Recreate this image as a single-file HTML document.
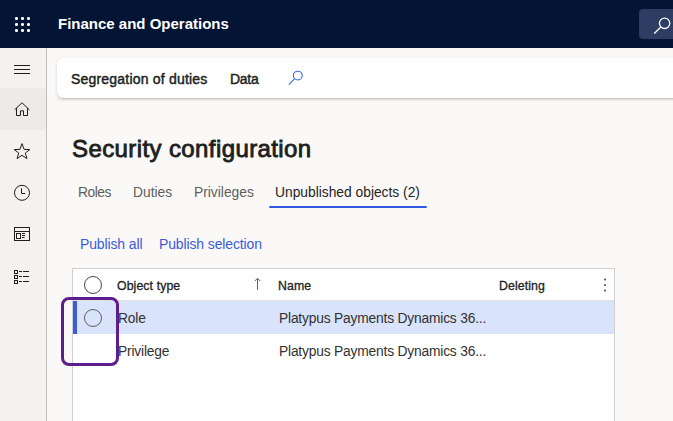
<!DOCTYPE html>
<html><head><meta charset="utf-8">
<style>
*{margin:0;padding:0;box-sizing:border-box;}
html,body{width:673px;height:421px;overflow:hidden;}
body{background:#faf9f8;font-family:"Liberation Sans",sans-serif;position:relative;color:#323130;}
.abs{position:absolute;}
#hdr{left:0;top:0;width:673px;height:48px;background:#041434;}
.dot{position:absolute;width:3px;height:3px;border-radius:1.3px;background:#fff;}
#apptitle{left:58px;top:15px;font-size:15px;font-weight:bold;color:#fff;white-space:nowrap;line-height:18px;}
#hsearch{left:639px;top:9px;width:60px;height:30px;border-radius:4px;background:#2d3d63;}
#side{left:0;top:48px;width:47px;height:373px;background:#f3f2f1;border-right:1px solid #bfbdbb;}
#homehl{left:0;top:88px;width:46px;height:42px;border-radius:4px;background:#edebe9;}
#card{left:57px;top:57.5px;width:640px;height:40.5px;background:#fff;border-radius:6px;box-shadow:0 1.6px 3.6px rgba(0,0,0,0.13),0 0.3px 0.9px rgba(0,0,0,0.11);}
.crumb{position:absolute;top:71px;font-size:14px;font-weight:normal;-webkit-text-stroke:0.45px #201f1e;letter-spacing:0.2px;color:#201f1e;white-space:nowrap;line-height:16px;}
#title{left:72px;top:135px;font-size:24px;font-weight:normal;-webkit-text-stroke:0.85px #201f1e;letter-spacing:0.4px;color:#201f1e;white-space:nowrap;line-height:28px;}
.tab{position:absolute;top:185px;font-size:13.8px;color:#605e5c;white-space:nowrap;line-height:16px;}
#tabline{left:269px;top:206px;width:158px;height:2px;border-radius:1px;background:#3457e0;}
.link{position:absolute;top:236px;font-size:14px;letter-spacing:-0.13px;color:#3d5bd9;white-space:nowrap;line-height:16px;}
#grid{left:72px;top:268px;width:543px;height:160px;background:#fff;border:1px solid #d2d0ce;}
#ghdrline{left:73px;top:300px;width:541px;height:1px;background:#e1dfdd;}
#selrow{left:73px;top:301px;width:541px;height:33px;background:#d9e3fb;}
#selbar{left:73px;top:301px;width:4px;height:33px;background:#3b5bdb;}
.circ{position:absolute;width:18px;height:18px;border-radius:50%;border:1px solid #605e5c;}
.gh{position:absolute;top:279px;font-size:12.3px;letter-spacing:0.1px;font-weight:normal;-webkit-text-stroke:0.3px #201f1e;color:#201f1e;white-space:nowrap;line-height:15px;}
.cell{position:absolute;font-size:13.8px;letter-spacing:-0.19px;color:#323130;white-space:nowrap;line-height:16px;}
#purple{left:61px;top:297px;width:58px;height:68.5px;border:3px solid #5e1d8d;border-radius:8px;}
svg{position:absolute;overflow:visible;}
</style></head><body>
<div id="hdr" class="abs"></div>
<div class="dot" style="left:14.6px;top:17px"></div><div class="dot" style="left:20.6px;top:17px"></div><div class="dot" style="left:26.6px;top:17px"></div>
<div class="dot" style="left:14.6px;top:23px"></div><div class="dot" style="left:20.6px;top:23px"></div><div class="dot" style="left:26.6px;top:23px"></div>
<div class="dot" style="left:14.6px;top:29px"></div><div class="dot" style="left:20.6px;top:29px"></div><div class="dot" style="left:26.6px;top:29px"></div>
<div id="apptitle" class="abs">Finance and Operations</div>
<div id="hsearch" class="abs"></div>
<svg style="left:0;top:0" width="673" height="48"><g fill="none" stroke="#fff" stroke-width="1.3"><circle cx="664.6" cy="23.3" r="5.2"/><path d="M660.9 27 L654.2 33.5"/></g></svg>

<div id="side" class="abs"></div>
<div id="homehl" class="abs"></div>
<svg style="left:0;top:0" width="46" height="421"><g fill="none" stroke="#201f1e" stroke-width="1">
<path d="M14 65.5H30M14 69.5H30M14 73.5H30"/>
<path d="M14.6 109.8 L22 102.8 L29.4 109.8 M16.5 108 V115.5 H20.5 V110.8 H23.5 V115.5 H27.5 V108"/>
<path d="M22 143.6 L24.1 149.4 L29.8 149.6 L25.3 153 L26.9 158.6 L22 155.3 L17.1 158.6 L18.7 153 L14.2 149.6 L19.9 149.4 Z" stroke-linejoin="miter"/>
<circle cx="22" cy="192.8" r="7.5"/><path d="M21.5 188.3 V193.5 H25.2"/>
<rect x="14.5" y="227.5" width="15" height="13"/><path d="M14.5 231.5 H29.5"/><rect x="16.5" y="233.5" width="4" height="5"/><path d="M22 233.5H25M22 235.5H25M22 237.5H24.5"/>
<rect x="14.5" y="270.5" width="3" height="3"/><rect x="14.5" y="275.5" width="3" height="3"/><rect x="14.5" y="280.5" width="3" height="3"/>
<path d="M19 271.5H22M23 271.5H29M19 276.5H22M23 276.5H29M19 281.5H22M23 281.5H29"/>
</g></svg>

<div id="card" class="abs"></div>
<div class="crumb" style="left:71px">Segregation of duties</div>
<div class="crumb" style="left:230px;letter-spacing:-0.3px">Data</div>
<svg style="left:0;top:0" width="320" height="100"><g fill="none" stroke="#4466e6" stroke-width="1.1"><circle cx="297.8" cy="75.6" r="4.4"/><path d="M294.7 78.7 L288.8 84.6"/></g></svg>

<div id="title" class="abs">Security configuration</div>
<div class="tab" style="left:78px;letter-spacing:-0.45px">Roles</div>
<div class="tab" style="left:133px">Duties</div>
<div class="tab" style="left:194px">Privileges</div>
<div class="tab" style="left:275px;color:#252423">Unpublished objects (2)</div>
<div id="tabline" class="abs"></div>

<div class="link" style="left:80px">Publish all</div>
<div class="link" style="left:159px">Publish selection</div>

<div id="grid" class="abs"></div>
<div id="ghdrline" class="abs"></div>
<div id="selrow" class="abs"></div>
<div id="selbar" class="abs"></div>
<div class="circ" style="left:84px;top:276px;border-color:#484644"></div>
<div class="circ" style="left:84px;top:309px"></div>
<div class="gh" style="left:117px">Object type</div>
<div class="gh" style="left:278px">Name</div>
<div class="gh" style="left:499px">Deleting</div>
<svg style="left:0;top:0" width="673" height="421"><g fill="none" stroke="#605e5c" stroke-width="1"><path d="M257.5 278.3 V289.8 M254.8 281 L257.5 278.3 L260.2 281"/></g>
<g fill="#484644"><circle cx="605" cy="279.5" r="1"/><circle cx="605" cy="285" r="1"/><circle cx="605" cy="290.5" r="1"/></g></svg>
<div class="cell" style="left:118px;top:311px">Role</div>
<div class="cell" style="left:279px;top:311px">Platypus Payments Dynamics 36...</div>
<div class="cell" style="left:118px;top:344px">Privilege</div>
<div class="cell" style="left:279px;top:344px">Platypus Payments Dynamics 36...</div>
<div id="purple" class="abs"></div>
</body></html>
